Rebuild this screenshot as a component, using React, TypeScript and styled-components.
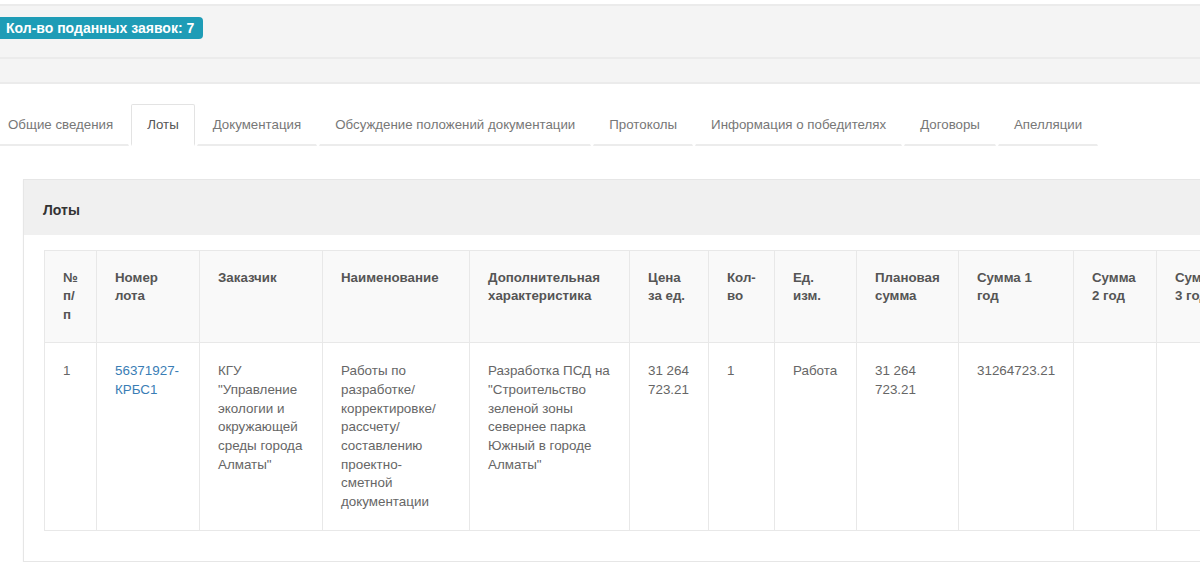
import React from "react";
import styled, { createGlobalStyle } from "styled-components";

const GlobalStyle = createGlobalStyle`
  html, body {
    margin: 0;
    padding: 0;
    background: #fff;
    overflow: hidden;
  }
  body {
    font-family: "Liberation Sans", Arial, sans-serif;
    font-size: 13px;
    line-height: 1.43;
    color: #666;
  }
`;

const tabs = [
  "Общие сведения",
  "Лоты",
  "Документация",
  "Обсуждение положений документации",
  "Протоколы",
  "Информация о победителях",
  "Договоры",
  "Апелляции",
];

const columns = [
  { title: "№ п/ п", width: 52 },
  { title: "Номер лота", width: 103 },
  { title: "Заказчик", width: 123 },
  { title: "Наименование", width: 147 },
  { title: "Дополнительная характеристика", width: 160 },
  { title: "Цена за ед.", width: 79 },
  { title: "Кол-во", width: 66 },
  { title: "Ед. изм.", width: 82 },
  { title: "Плановая сумма", width: 102 },
  { title: "Сумма 1 год", width: 115 },
  { title: "Сумма 2 год", width: 83 },
  { title: "Сумма 3 год", width: 90 },
];

const tableWidth = columns.reduce((s, c) => s + c.width, 0);

const Page = styled.div`
  width: 1400px;
  padding-top: 4px;
`;

const InfoWell = styled.div`
  background: #f4f4f4;
  border-top: 2px solid #ebebeb;
  border-bottom: 2px solid #ebebeb;
  height: 55px;
  box-sizing: border-box;
  padding-top: 11px;
`;

const EmptyWell = styled.div`
  background: #f4f4f4;
  border-bottom: 2px solid #ebebeb;
  height: 25px;
  box-sizing: border-box;
`;

const Badge = styled.span`
  display: inline-block;
  background: #1e9cb6;
  color: #fff;
  font-weight: bold;
  font-size: 14px;
  line-height: 22px;
  padding: 0 9px 0 14px;
  margin-left: -8px;
  border-radius: 4px;
`;

const Nav = styled.ul`
  list-style: none;
  display: flex;
  gap: 2px;
  margin: 20px 0 0 -8px;
  padding: 0;
`;

const Tab = styled.li<{ $active?: boolean }>`
  padding: 11px 15px 9px;
  font-size: 13.3px;
  line-height: 18.6px;
  color: ${(p) => (p.$active ? "#555" : "#777")};
  border: 1px solid ${(p) => (p.$active ? "#e3e3e3" : "transparent")};
  border-bottom: 2px solid ${(p) => (p.$active ? "transparent" : "#ececec")};
  border-radius: 2px 2px 0 0;
  background: #fff;
  white-space: nowrap;
`;

const Panel = styled.section`
  margin: 33px 0 0 23px;
  width: 1320px;
  border: 1px solid #e6e6e6;
  box-shadow: 0 1px 2px rgba(0, 0, 0, 0.04);
  background: #fff;
`;

const PanelHeading = styled.div`
  background: #f0f0f0;
  height: 55px;
  box-sizing: border-box;
  display: flex;
  align-items: center;
  padding: 5px 19px 0;
  font-weight: bold;
  font-size: 14px;
  color: #333;
`;

const PanelBody = styled.div`
  padding: 15px 20px 30px;
`;

const Table = styled.table`
  border-collapse: collapse;
  table-layout: fixed;
`;

const Th = styled.th`
  background: #f9f9f9;
  border: 1px solid #e8e8e8;
  padding: 18px;
  text-align: left;
  vertical-align: top;
  font-weight: bold;
  font-size: 13.3px;
  line-height: 18.5px;
  color: #555;
`;

const Td = styled.td`
  border: 1px solid #e8e8e8;
  padding: 19px 18px 18px;
  vertical-align: top;
  font-size: 13.4px;
  line-height: 18.7px;
  color: #666;
`;

const LotLink = styled.a`
  color: #3a7db5;
  text-decoration: none;
`;

const row = [
  "1",
  null,
  'КГУ "Управление экологии и окружающей среды города Алматы"',
  "Работы по разработке/ корректировке/ рассчету/ составлению проектно-сметной документации",
  'Разработка ПСД на "Строительство зеленой зоны севернее парка Южный в городе Алматы"',
  "31 264 723.21",
  "1",
  "Работа",
  "31 264 723.21",
  "31264723.21",
  "",
  "",
];

export default function App() {
  return (
    <Page>
      <GlobalStyle />
      <InfoWell>
        <Badge>Кол-во поданных заявок: 7</Badge>
      </InfoWell>
      <EmptyWell />
      <Nav>
        {tabs.map((t) => (
          <Tab key={t} $active={t === "Лоты"}>
            {t}
          </Tab>
        ))}
      </Nav>
      <Panel>
        <PanelHeading>Лоты</PanelHeading>
        <PanelBody>
          <Table style={{ width: tableWidth }}>
            <colgroup>
              {columns.map((c) => (
                <col key={c.title} style={{ width: c.width }} />
              ))}
            </colgroup>
            <thead>
              <tr>
                {columns.map((c) => (
                  <Th key={c.title}>{c.title}</Th>
                ))}
              </tr>
            </thead>
            <tbody>
              <tr>
                {row.map((v, i) => (
                  <Td key={i}>
                    {v === null ? <LotLink href="#">56371927-КРБС1</LotLink> : v}
                  </Td>
                ))}
              </tr>
            </tbody>
          </Table>
        </PanelBody>
      </Panel>
    </Page>
  );
}
